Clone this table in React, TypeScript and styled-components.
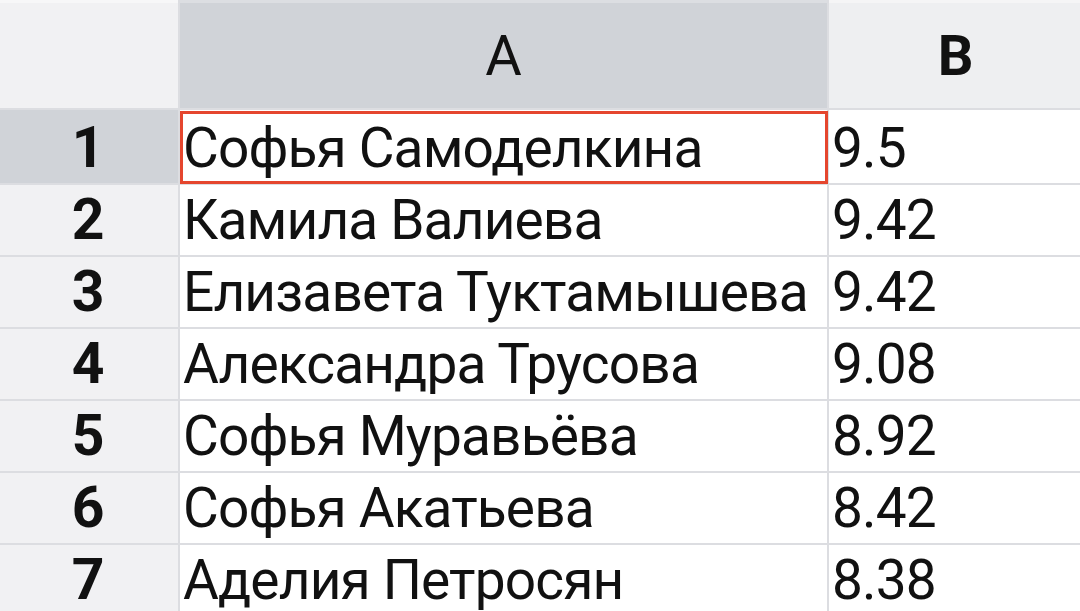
import * as React from "react";
import styled, { createGlobalStyle } from "styled-components";

const GlobalStyle = createGlobalStyle`
  html, body {
    margin: 0;
    padding: 0;
    background: #ffffff;
    overflow: hidden;
  }
  body {
    font-family: Roboto, "Noto Sans", sans-serif;
  }
`;

const rows = [
  { name: "Софья Самоделкина", score: "9.5" },
  { name: "Камила Валиева", score: "9.42" },
  { name: "Елизавета Туктамышева", score: "9.42" },
  { name: "Александра Трусова", score: "9.08" },
  { name: "Софья Муравьёва", score: "8.92" },
  { name: "Софья Акатьева", score: "8.42" },
  { name: "Аделия Петросян", score: "8.38" }
];

const Sheet = styled.div`
  display: grid;
  grid-template-columns: 178px 647px 253px;
  grid-template-rows: 108px 73px repeat(6, 70px);
  gap: 2px;
  width: 1080px;
  height: 611px;
  background: #dcdde1;
  overflow: hidden;
`;

const Corner = styled.div`
  background: #f1f1f3;
  border-top: 3px solid #f7f7f8;
`;

const ColHeader = styled.div<{ $selected?: boolean }>`
  display: flex;
  align-items: flex-end;
  justify-content: center;
  background: ${p => (p.$selected ? "#d0d3d8" : "#eeeff1")};
  border-top: 3px solid ${p => (p.$selected ? "#dcdee2" : "#f5f5f6")};
  color: #111;
  font-size: 56px;
  font-weight: ${p => (p.$selected ? 400 : 700)};
  line-height: 1;
  padding-bottom: 24px;
`;

const RowHeader = styled.div<{ $selected?: boolean }>`
  display: flex;
  align-items: flex-end;
  justify-content: center;
  background: ${p => (p.$selected ? "#d0d3d8" : "#f1f1f3")};
  color: #111;
  font-size: 57px;
  font-weight: 700;
  line-height: 1;
  padding: 0 2px 7px 0;
`;

const Cell = styled.div<{ $active?: boolean }>`
  position: relative;
  display: flex;
  align-items: flex-end;
  background: #ffffff;
  color: #111;
  font-size: 55px;
  letter-spacing: -0.85px;
  line-height: 1;
  padding: 0 0 7px 3px;
  white-space: nowrap;
  overflow: visible;
  z-index: ${p => (p.$active ? 1 : 0)};
`;

const Selection = styled.div`
  position: absolute;
  left: 0;
  top: 1px;
  right: -1px;
  bottom: -1px;
  border: 3px solid #e5462e;
  pointer-events: none;
`;

export default function App() {
  return (
    <>
      <GlobalStyle />
      <Sheet>
        <Corner />
        <ColHeader $selected>A</ColHeader>
        <ColHeader>B</ColHeader>
        {rows.map((row, i) => (
          <React.Fragment key={i}>
            <RowHeader $selected={i === 0}>{i + 1}</RowHeader>
            <Cell $active={i === 0}>
              {row.name}
              {i === 0 && <Selection />}
            </Cell>
            <Cell>{row.score}</Cell>
          </React.Fragment>
        ))}
      </Sheet>
    </>
  );
}
